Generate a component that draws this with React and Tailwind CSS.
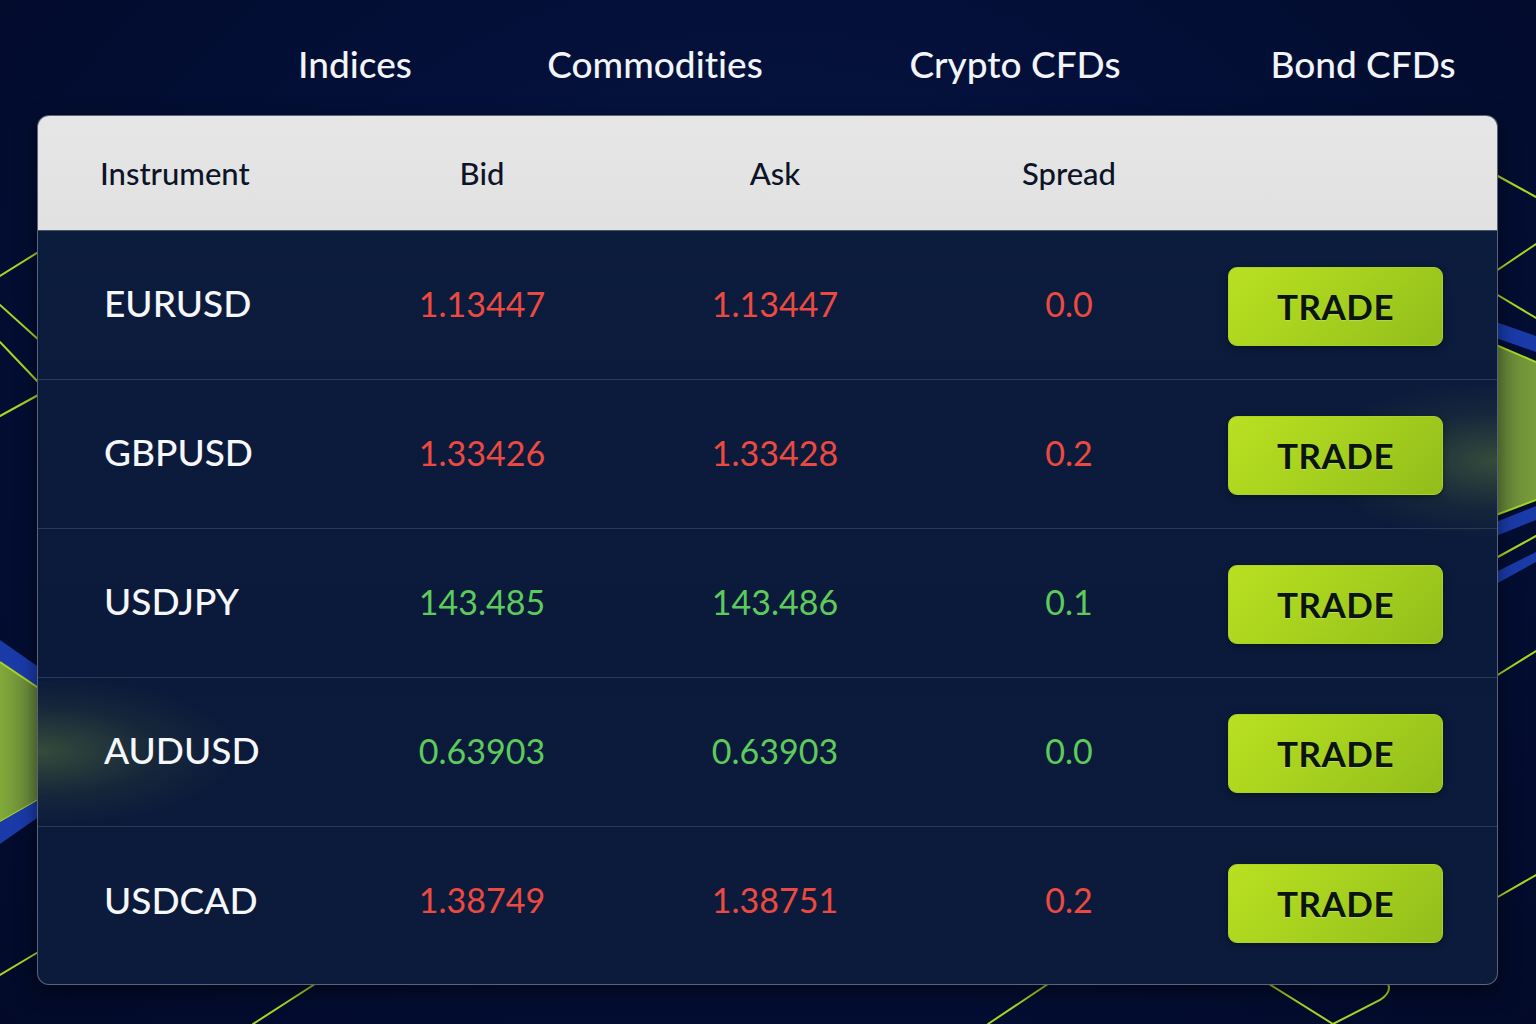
import React from "react";

const tabs = [
  { label: "Indices", cls: "ml-[235px]" },
  { label: "Commodities", cls: "ml-[60px]" },
  { label: "Crypto CFDs", cls: "ml-[120px]" },
  { label: "Bond CFDs", cls: "ml-[108px]" },
];

const rows = [
  { name: "EURUSD", bid: "1.13447", ask: "1.13447", spread: "0.0", up: false },
  { name: "GBPUSD", bid: "1.33426", ask: "1.33428", spread: "0.2", up: false },
  { name: "USDJPY", bid: "143.485", ask: "143.486", spread: "0.1", up: true },
  { name: "AUDUSD", bid: "0.63903", ask: "0.63903", spread: "0.0", up: true },
  { name: "USDCAD", bid: "1.38749", ask: "1.38751", spread: "0.2", up: false },
];

const Backdrop = () => (
  <svg
    className="absolute inset-0 h-full w-full"
    viewBox="0 0 1536 1024"
    preserveAspectRatio="none"
  >
    <defs>
      <linearGradient id="greenR" x1="0" y1="0" x2="1" y2="0">
        <stop offset="0" stopColor="#6f8f3a" stopOpacity="0.9" />
        <stop offset="1" stopColor="#7fa53a" stopOpacity="0.95" />
      </linearGradient>
      <linearGradient id="greenL" x1="0" y1="0" x2="1" y2="0">
        <stop offset="0" stopColor="#88b23a" stopOpacity="0.95" />
        <stop offset="1" stopColor="#6c8c3c" stopOpacity="0.9" />
      </linearGradient>
    </defs>
    <g fill="none" stroke="#a8d524" strokeWidth="2" strokeLinecap="round">
      {/* left side */}
      <path d="M0 276 L40 251" />
      <path d="M0 305 L40 341" />
      <path d="M0 342 L40 384" />
      <path d="M0 416 L40 394" />
      <path d="M0 975 L40 951" />
      {/* right side */}
      <path d="M1496 175 L1536 197" />
      <path d="M1496 271 L1536 244" />
      <path d="M1496 294 L1536 318" />
      <path d="M1496 558 L1536 536" />
      <path d="M1496 676 L1536 651" />
      <path d="M1496 898 L1536 875" />
      {/* bottom */}
      <path d="M315 984 L253 1024" />
      <path d="M1048 984 L988 1024" />
      <path d="M1269 984 L1333 1024 L1380 1000 Q1392 992 1388 984" />
    </g>
    {/* left bands */}
    <polygon points="0,640 40,668 40,690 0,662" fill="#1a3aa8" />
    <polygon points="0,662 40,689 40,799 0,822" fill="url(#greenL)" />
    <path d="M0 662 L40 689" stroke="#a8d524" strokeWidth="2" />
    <path d="M0 822 L40 799" stroke="#a8d524" strokeWidth="2" />
    <polygon points="0,822 40,799 40,816 0,844" fill="#1a3aa8" />
    {/* right bands */}
    <polygon points="1496,322 1536,336 1536,352 1496,338" fill="#1a3aa8" />
    <polygon points="1496,345 1536,362 1536,500 1496,515" fill="url(#greenR)" />
    <path d="M1496 345 L1536 362" stroke="#a8d524" strokeWidth="2" />
    <path d="M1496 515 L1536 500" stroke="#a8d524" strokeWidth="2" />
    <polygon points="1496,522 1536,506 1536,520 1496,536" fill="#1a3aa8" />
    <polygon points="1496,572 1536,552 1536,562 1496,584" fill="#1a3aa8" />
  </svg>
);

const TradeButton = () => (
  <button className="h-[79px] w-[215px] rounded-[9px] border border-[#a9d322] bg-[linear-gradient(135deg,#b9e021_0%,#a6d01e_50%,#92bd1b_100%)] text-[35px] font-bold tracking-[0.5px] text-[#0a1510] shadow-[0_2px_6px_rgba(0,0,0,0.35)] [text-shadow:0_1px_1px_rgba(255,255,255,0.25)]">
    TRADE
  </button>
);

export default function App() {
  return (
    <div className="relative h-[1024px] w-full overflow-hidden bg-[radial-gradient(ellipse_at_50%_40%,#0a1a44_0%,#04103a_45%,#020a28_100%)] font-['Lato','Liberation_Sans',sans-serif] [font-variant-ligatures:none]">
      <Backdrop />

      <div className="relative flex h-[115px] items-center pt-[12px]">
        {tabs.map((tab) => (
          <div
            key={tab.label}
            className={`${tab.cls} w-[240px] text-center text-[37px] font-medium text-[#f1f4f8]`}
          >
            {tab.label}
          </div>
        ))}
      </div>

      <div className="relative mx-[37px] w-[1461px] overflow-hidden rounded-[12px] border border-[#7a8599]/70 bg-[linear-gradient(180deg,#0c1c3e_0%,#0b1a3a_60%,#0c1b3b_100%)] shadow-[0_6px_20px_rgba(0,0,0,0.5)]">
        {/* glows bleeding into the table */}
        <div className="pointer-events-none absolute left-0 top-[565px] h-[140px] w-[190px] bg-[radial-gradient(ellipse_at_left,rgba(140,180,60,0.32)_0%,rgba(140,180,60,0.08)_45%,transparent_75%)]" />
        <div className="pointer-events-none absolute right-0 top-[270px] h-[150px] w-[170px] bg-[radial-gradient(ellipse_at_right,rgba(140,180,60,0.32)_0%,rgba(140,180,60,0.08)_45%,transparent_75%)]" />

        <div className="grid h-[115px] grid-cols-[292px_304px_282px_306px_1fr] items-center border-b border-[#4b5568] bg-[linear-gradient(180deg,#e6e6e6_0%,#e1e1e1_100%)] text-[31px] font-medium text-[#0d1428]">
          <div className="pl-[62px]">Instrument</div>
          <div className="text-center">Bid</div>
          <div className="text-center">Ask</div>
          <div className="text-center">Spread</div>
          <div />
        </div>

        {rows.map((row, i) => {
          const tone = row.up ? "text-[#5ccb5c]" : "text-[#ec4a40]";
          return (
            <div
              key={row.name}
              className={`relative grid h-[149px] grid-cols-[292px_304px_282px_306px_1fr] items-center ${
                i < rows.length - 1 ? "border-b border-[#2c3956]" : ""
              }`}
            >
              <div className="pl-[66px] pb-[4px] text-[37px] font-medium text-[#f5f7fb]">
                {row.name}
              </div>
              <div className={`pb-[4px] text-center text-[34px] ${tone}`}>{row.bid}</div>
              <div className={`pb-[4px] text-center text-[34px] ${tone}`}>{row.ask}</div>
              <div className={`pb-[4px] text-center text-[34px] ${tone}`}>{row.spread}</div>
              <div className="flex justify-end pr-[54px] pt-[3px]">
                <TradeButton />
              </div>
            </div>
          );
        })}
        <div className="h-[8px]" />
      </div>
    </div>
  );
}
